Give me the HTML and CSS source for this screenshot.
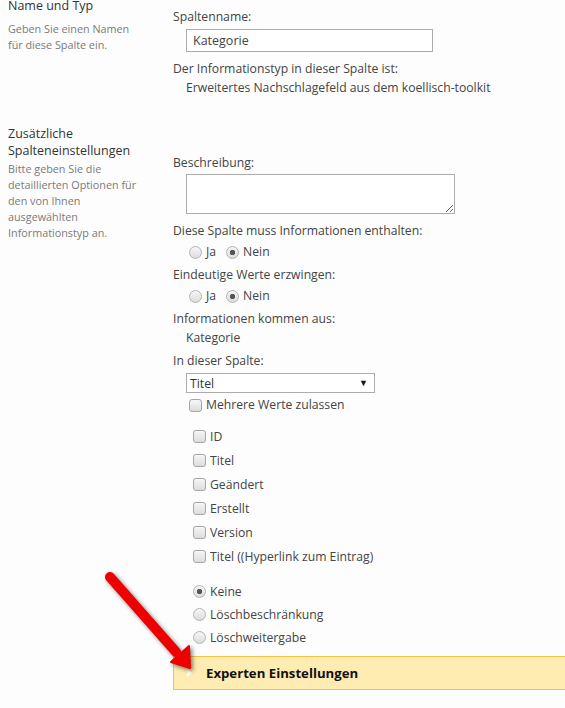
FILE: index.html
```html
<!DOCTYPE html>
<html lang="de">
<head>
    <meta charset="UTF-8">
    <meta name="viewport" content="width=device-width, initial-scale=1.0">
    <title>Spalte bearbeiten</title>
    <link rel="stylesheet" href="styles.css">
</head>
<body>
<div class="form">
    <div class="section section-name">
        <div class="side">
            <h3>Name und Typ</h3>
            <p>Geben Sie einen Namen für diese Spalte ein.</p>
        </div>
        <div class="main">
            <div class="label">Spaltenname:</div>
            <input type="text" class="text-input" value="Kategorie">
            <div class="label gap">Der Informationstyp in dieser Spalte ist:</div>
            <div class="value">Erweitertes Nachschlagefeld aus dem koellisch-toolkit</div>
        </div>
    </div>

    <div class="section section-extra">
        <div class="side">
            <h3>Zusätzliche Spalteneinstellungen</h3>
            <p>Bitte geben Sie die detaillierten Optionen für den von Ihnen ausgewählten Informationstyp an.</p>
        </div>
        <div class="main">
            <div class="label">Beschreibung:</div>
            <textarea class="text-area"></textarea>

            <div class="label gap">Diese Spalte muss Informationen enthalten:</div>
            <div class="radio-row">
                <label><input type="radio" name="required"> Ja</label>
                <label><input type="radio" name="required" checked> Nein</label>
            </div>

            <div class="label gap-sm">Eindeutige Werte erzwingen:</div>
            <div class="radio-row">
                <label><input type="radio" name="unique"> Ja</label>
                <label><input type="radio" name="unique" checked> Nein</label>
            </div>

            <div class="label gap-sm">Informationen kommen aus:</div>
            <div class="value">Kategorie</div>

            <div class="label gap-sm">In dieser Spalte:</div>
            <div class="select-wrap">
                <select class="select">
                    <option>Titel</option>
                </select>
            </div>
            <label class="multi"><input type="checkbox"> Mehrere Werte zulassen</label>

            <div class="check-list">
                <label><input type="checkbox"> ID</label>
                <label><input type="checkbox"> Titel</label>
                <label><input type="checkbox"> Geändert</label>
                <label><input type="checkbox"> Erstellt</label>
                <label><input type="checkbox"> Version</label>
                <label><input type="checkbox"> Titel ((Hyperlink zum Eintrag)</label>
            </div>

            <div class="radio-list">
                <label><input type="radio" name="delete" checked> Keine</label>
                <label><input type="radio" name="delete"> Löschbeschränkung</label>
                <label><input type="radio" name="delete"> Löschweitergabe</label>
            </div>
        </div>
    </div>

    <div class="expert">
        <span class="expert-toggle"></span>
        <span class="expert-title">Experten Einstellungen</span>
    </div>
</div>

<svg class="arrow" width="110" height="120" viewBox="95 565 110 120">
    <line x1="110" y1="577" x2="176" y2="652" stroke="#ee0000" stroke-width="10" stroke-linecap="round"/>
    <polygon points="171,662 189,646 190,668" fill="#ee0000" stroke="#ee0000" stroke-width="2" stroke-linejoin="round"/>
</svg>
</body>
</html>
```

FILE: styles.css
```css
* {
    box-sizing: border-box;
    margin: 0;
    padding: 0;
}

body {
    font-family: "Open Sans", "Noto Sans", sans-serif;
    font-size: 12.2px;
    background-color: #fdfdfd;
    color: #444;
    overflow: hidden;
}

.form {
    margin-top: -3px;
}

.section {
    display: grid;
    grid-template-columns: 173px 1fr;
}

.section-extra {
    margin-top: 24px;
}

.side {
    padding-left: 8px;
    padding-right: 30px;
}

.side h3 {
    font-weight: normal;
    font-size: 12.5px;
    line-height: 17px;
    color: #333;
}

.side p {
    font-size: 10.8px;
    line-height: 16px;
    color: #7a7a7a;
}

.section-name .side p {
    margin-top: 7px;
}

.section-extra .side {
    padding-top: 4px;
}

.section-extra .side h3 {
    padding-right: 10px;
}

.section-extra .side p {
    margin-top: 2px;
}

.main {
    display: flex;
    flex-direction: column;
    align-items: flex-start;
}

.section-name .main {
    padding-top: 11px;
}

.section-extra .main {
    padding-top: 33px;
}

.label {
    line-height: 18px;
}

.gap {
    margin-top: 8px;
}

.gap-sm {
    margin-top: 5px;
}

.value {
    line-height: 18px;
    margin-left: 13px;
    margin-top: 1px;
}

.text-input {
    margin: 3px 0 0 13px;
    width: 247px;
    height: 23px;
    border: 1px solid #ababab;
    background: #fff;
    padding: 0 6px;
    font: inherit;
    font-size: 12.5px;
    color: #444;
}

.text-area {
    margin: 2px 0 0 13px;
    width: 269px;
    height: 40px;
    border: 1px solid #ababab;
    background: #fff;
}

.radio-row {
    display: flex;
    gap: 10px;
    margin: 3px 0 0 16px;
    line-height: 18px;
}

.radio-row label,
.check-list label,
.radio-list label,
.multi {
    display: flex;
    align-items: center;
    gap: 4px;
}

input[type="radio"],
input[type="checkbox"] {
    appearance: none;
    width: 13px;
    height: 13px;
    border: 1px solid #b4b4b4;
    background: linear-gradient(#f6f6f6, #dcdcdc);
    flex-shrink: 0;
}

input[type="radio"] {
    border-radius: 50%;
}

input[type="radio"]:checked {
    background: radial-gradient(circle, #555 0 2.4px, transparent 3px), linear-gradient(#f6f6f6, #dcdcdc);
}

input[type="checkbox"] {
    border-radius: 3px;
    border-color: #a6a6a6;
}

.select-wrap {
    position: relative;
    margin: 3px 0 0 13px;
}

.select-wrap::after {
    content: "▼";
    position: absolute;
    right: 7px;
    top: 3px;
    font-size: 9px;
    color: #111;
    pointer-events: none;
}

.select {
    appearance: none;
    width: 189px;
    height: 20px;
    border: 1px solid #ababab;
    background: #fff;
    padding: 0 3px;
    font: inherit;
    color: #333;
}

.multi {
    margin: 3px 0 0 16px;
    line-height: 18px;
}

.check-list {
    margin: 10px 0 0 20px;
    display: flex;
    flex-direction: column;
}

.check-list label {
    height: 24px;
}

.radio-list {
    margin: 12px 0 0 20px;
    display: flex;
    flex-direction: column;
}

.radio-list label {
    height: 23px;
}

.expert {
    margin: 7px 0 0 173px;
    height: 34px;
    background: #feecb2;
    border: 1px solid #f5c445;
    border-right: none;
    display: flex;
    align-items: center;
}

.expert-toggle {
    width: 0;
    height: 0;
    border-left: 5px solid #fff;
    border-top: 4px solid transparent;
    border-bottom: 4px solid transparent;
    margin-left: 13px;
}

.expert-title {
    margin-left: 14px;
    font-weight: bold;
    font-size: 13.2px;
    color: #111;
}

.arrow {
    position: absolute;
    left: 95px;
    top: 565px;
    filter: drop-shadow(2px 2px 2px rgba(0, 0, 0, 0.5));
}
```
